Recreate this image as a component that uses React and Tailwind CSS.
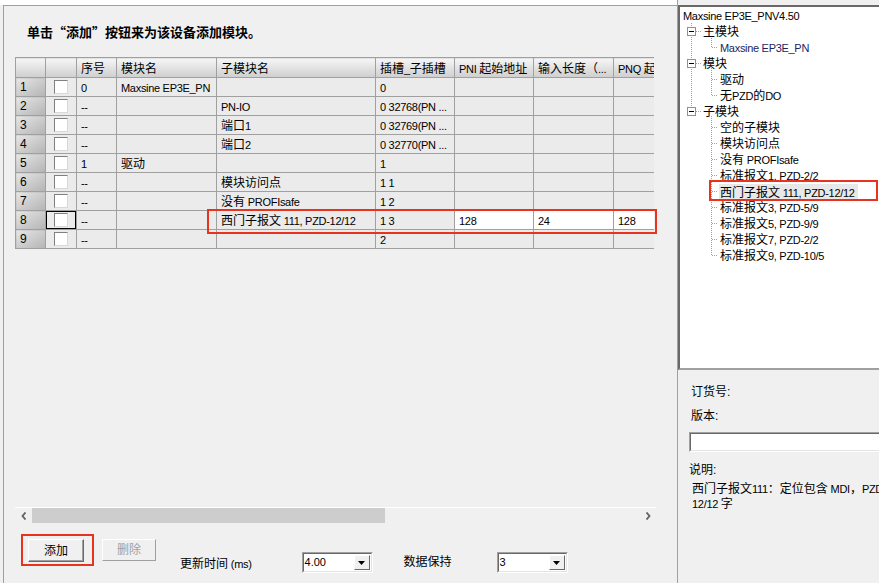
import React from "react";

const CJK = /[\u3000-\u303f\u4e00-\u9fff\uff00-\uffef“”]/;
function Mixed({ text }) {
  const parts = text.split(/([\u3000-\u303f\u4e00-\u9fff\uff00-\uffef“”]+)/);
  return (
    <span className="whitespace-pre">
      {parts.map((p, i) =>
        p === "" ? null : CJK.test(p) ? (
          <span key={i} className="text-[12px]">{p}</span>
        ) : (
          <span key={i} className="text-[11px] tracking-[-0.3px]">{p}</span>
        )
      )}
    </span>
  );
}

const rows = [
  { n: 1, seq: "0", mod: "Maxsine EP3E_PN", sub: "", slot: "0" },
  { n: 2, seq: "--", mod: "", sub: "PN-IO", slot: "0 32768(PN ..." },
  { n: 3, seq: "--", mod: "", sub: "端口1", slot: "0 32769(PN ..." },
  { n: 4, seq: "--", mod: "", sub: "端口2", slot: "0 32770(PN ..." },
  { n: 5, seq: "1", mod: "驱动", sub: "", slot: "1" },
  { n: 6, seq: "--", mod: "", sub: "模块访问点", slot: "1 1" },
  { n: 7, seq: "--", mod: "", sub: "没有 PROFIsafe", slot: "1 2" },
  { n: 8, seq: "--", mod: "", sub: "西门子报文 111, PZD-12/12", slot: "1 3", pni: "128", len: "24", pnq: "128", sel: true },
  { n: 9, seq: "--", mod: "", sub: "", slot: "2" },
];

const headers = ["", "", "序号", "模块名", "子模块名", "插槽_子插槽", "PNI 起始地址", "输入长度（...", "PNQ 起"];
const widths = [30, 31, 40, 100, 159, 79, 79, 80, 80];

function Checkbox() {
  return (
    <div className="w-[14px] h-[14px] bg-white border border-t-[#808080] border-l-[#808080] border-b-[#d8d8d8] border-r-[#d8d8d8]" />
  );
}

function Combo({ value }) {
  return (
    <div className="w-[71px] h-[21px] bg-white border border-t-[#a0a0a0] border-l-[#a0a0a0] border-b-white border-r-white flex items-center">
      <div className="flex-1 h-full border border-t-[#696969] border-l-[#696969] border-b-[#e3e3e3] border-r-[#e3e3e3] flex items-center justify-between pl-[1px] pr-[1px]">
        <span className="text-[11px] leading-none">{value}</span>
        <div className="w-[16px] h-[15px] bg-[#f0f0f0] border border-t-white border-l-white border-b-[#696969] border-r-[#696969] flex items-center justify-center">
          <svg width="7" height="4" viewBox="0 0 7 4"><polygon points="0,0 7,0 3.5,4" fill="#000" /></svg>
        </div>
      </div>
    </div>
  );
}

const treeRows = [
  { lvl: 0, t: "Maxsine EP3E_PNV4.50" },
  { lvl: 1, t: "主模块" },
  { lvl: 2, t: "Maxsine EP3E_PN", blue: true },
  { lvl: 1, t: "模块" },
  { lvl: 2, t: "驱动" },
  { lvl: 2, t: "无PZD的DO" },
  { lvl: 1, t: "子模块" },
  { lvl: 2, t: "空的子模块" },
  { lvl: 2, t: "模块访问点" },
  { lvl: 2, t: "没有 PROFIsafe" },
  { lvl: 2, t: "标准报文1, PZD-2/2" },
  { lvl: 2, t: "西门子报文 111, PZD-12/12", sel: true },
  { lvl: 2, t: "标准报文3, PZD-5/9" },
  { lvl: 2, t: "标准报文5, PZD-9/9" },
  { lvl: 2, t: "标准报文7, PZD-2/2" },
  { lvl: 2, t: "标准报文9, PZD-10/5" },
];

function TreeLines() {
  const boxes = [24, 56, 104];
  return (
    <svg className="absolute left-0 top-0" width="60" height="260" viewBox="0 0 60 260">
      <g stroke="#a0a0a0" strokeWidth="1" strokeDasharray="1 1" shapeRendering="crispEdges">
        <line x1="11.5" y1="16" x2="11.5" y2="104" />
        {boxes.map((y) => (
          <line key={y} x1="16" y1={y + 0.5} x2="21" y2={y + 0.5} />
        ))}
        <line x1="31.5" y1="29" x2="31.5" y2="40" />
        <line x1="31.5" y1="61" x2="31.5" y2="88" />
        <line x1="31.5" y1="109" x2="31.5" y2="248" />
        {[40, 72, 88, 120, 136, 152, 168, 184, 200, 216, 232, 248].map((y) => (
          <line key={y} x1="32" y1={y + 0.5} x2="38" y2={y + 0.5} />
        ))}
      </g>
      {boxes.map((y) => (
        <g key={y} shapeRendering="crispEdges">
          <rect x="7.5" y={y - 3.5} width="8" height="8" fill="#fff" stroke="#919191" />
          <line x1="9" y1={y + 0.5} x2="14" y2={y + 0.5} stroke="#000" />
        </g>
      ))}
    </svg>
  );
}

export default function App() {
  return (
    <div className="w-[879px] h-[583px] flex bg-[#f0f0f0] overflow-hidden text-black font-['Liberation_Sans','Noto_Sans_CJK_SC',sans-serif] leading-none">
      {/* Left panel */}
      <div className="w-[677px] flex flex-col">
        <div className="h-[5px] bg-white" />
        <div className="flex-1 ml-[3px] border-l border-t border-[#a0a0a0] flex flex-col">
          <div className="h-[51px] flex items-center pl-[23px]">
            <span className="text-[13px] font-bold font-['Noto_Sans_CJK_SC',sans-serif]">单击“添加”按钮来为该设备添加模块。</span>
          </div>
          {/* Table view */}
          <div className="relative ml-[11px] h-[450px] w-[641px]">
            <div className="w-[639px] overflow-hidden">
              <table className="border-collapse table-fixed w-[678px]">
                <colgroup>
                  {widths.map((w, i) => (
                    <col key={i} style={{ width: w }} />
                  ))}
                </colgroup>
                <thead>
                  <tr className="h-[20px]">
                    {headers.map((h, i) => (
                      <th
                        key={i}
                        className="border border-[#a0a0a0] bg-linear-to-b from-[#f6f6f6] to-[#cfcfcf] font-normal text-left px-[4px] whitespace-nowrap overflow-hidden"
                      >
                        <Mixed text={h} />
                      </th>
                    ))}
                  </tr>
                </thead>
                <tbody>
                  {rows.map((r) => (
                    <tr key={r.n} className="h-[19px]">
                      <td className="border border-[#a0a0a0] bg-linear-to-br from-[#e6e6e6] to-[#b4b4b4] px-[4px] text-[12px]">
                        {r.n}
                      </td>
                      <td className="border border-[#a0a0a0] bg-[#ebebeb] p-0">
                        <div className={`h-[18px] flex items-center justify-center ${r.sel ? "border border-black" : ""}`}>
                          <Checkbox />
                        </div>
                      </td>
                      <td className="border border-[#a0a0a0] bg-[#ebebeb] px-[4px] whitespace-nowrap overflow-hidden"><Mixed text={r.seq} /></td>
                      <td className="border border-[#a0a0a0] bg-[#ebebeb] px-[4px] whitespace-nowrap overflow-hidden"><Mixed text={r.mod} /></td>
                      <td className="border border-[#a0a0a0] bg-[#ebebeb] px-[4px] whitespace-nowrap overflow-hidden"><Mixed text={r.sub} /></td>
                      <td className="border border-[#a0a0a0] bg-[#ebebeb] px-[4px] whitespace-nowrap overflow-hidden"><Mixed text={r.slot} /></td>
                      <td className={`border border-[#a0a0a0] px-[4px] whitespace-nowrap overflow-hidden ${r.sel ? "bg-white" : "bg-[#ebebeb]"}`}><Mixed text={r.pni || ""} /></td>
                      <td className={`border border-[#a0a0a0] px-[4px] whitespace-nowrap overflow-hidden ${r.sel ? "bg-white" : "bg-[#ebebeb]"}`}><Mixed text={r.len || ""} /></td>
                      <td className={`border border-[#a0a0a0] px-[4px] whitespace-nowrap overflow-hidden ${r.sel ? "bg-white" : "bg-[#ebebeb]"}`}><Mixed text={r.pnq || ""} /></td>
                    </tr>
                  ))}
                </tbody>
              </table>
            </div>
            <div className="absolute left-[192px] top-[152px] w-[450px] h-[25px] border-2 border-[#e8331f]" />
          </div>
          {/* Horizontal scrollbar */}
          <div className="ml-[11px] w-[641px] h-[16px] border-t border-white flex items-center">
            <div className="w-[17px] h-full flex items-center justify-center">
              <svg width="6" height="8" viewBox="0 0 6 8"><polyline points="4.5,0.5 1.5,4 4.5,7.5" fill="none" stroke="#606060" strokeWidth="1.8" /></svg>
            </div>
            <div className="w-[353px] h-full bg-[#cdcdcd]" />
            <div className="flex-1" />
            <div className="w-[17px] h-full flex items-center justify-center">
              <svg width="6" height="8" viewBox="0 0 6 8"><polyline points="1.5,0.5 4.5,4 1.5,7.5" fill="none" stroke="#606060" strokeWidth="1.8" /></svg>
            </div>
          </div>
          {/* Bottom controls */}
          <div className="h-[60px] flex items-start">
            <div className="relative ml-[24px] mt-[16px]">
              <div className="w-[56px] h-[23px] bg-[#f0f0f0] border border-t-white border-l-white border-b-[#696969] border-r-[#696969] shadow-[inset_-1px_-1px_0_#a0a0a0] flex items-center justify-center text-[12px]">
                添加
              </div>
              <div className="absolute -left-[7px] -top-[5px] w-[73px] h-[32px] border-2 border-[#e8331f]" />
            </div>
            <div className="ml-[18px] mt-[16px] w-[54px] h-[22px] bg-[#f0f0f0] border border-t-white border-l-white border-b-[#a0a0a0] border-r-[#a0a0a0] flex items-center justify-center text-[12px] text-[#a0a0a0]">
              删除
            </div>
            <div className="ml-[24px] mt-[32px] whitespace-nowrap">
              <Mixed text="更新时间 (ms)" />
            </div>
            <div className="ml-[50px] mt-[29px]">
              <Combo value="4.00" />
            </div>
            <div className="ml-[31px] mt-[33px] text-[12px]">数据保持</div>
            <div className="ml-[45px] mt-[29px]">
              <Combo value="3" />
            </div>
          </div>
        </div>
      </div>

      {/* Right panel */}
      <div className="w-[202px] border-l border-[#a0a0a0] flex flex-col pt-[5px]">
        <div className="relative h-[365px] bg-white border-t-2 border-l-2 border-[#696969] border-b-2 border-b-[#a0a0a0]">
          <TreeLines />
          <div className="relative">
            {treeRows.map((r, i) => (
              <div
                key={i}
                className={`h-[16px] flex items-center whitespace-nowrap ${r.lvl === 0 ? "pl-[2px]" : r.lvl === 1 ? "pl-[22px]" : "pl-[39px]"} ${r.blue ? "text-[#1a2560]" : ""}`}
              >
                <span className={`${r.sel ? "bg-[#e8e8e8] pl-[1px] pr-[3px] h-[15px] leading-[15px] inline-block" : "pl-[1px]"}`}>
                  <Mixed text={r.t} />
                </span>
              </div>
            ))}
            <div className="absolute left-[29px] top-[173px] w-[169px] h-[21px] border-2 border-[#e8331f]" />
          </div>
        </div>
        <div className="flex-1 flex flex-col">
          <div className="mt-[14px] pl-[13px] h-[16px] flex items-center text-[12px]">订货号:</div>
          <div className="mt-[8px] pl-[13px] h-[16px] flex items-center text-[12px]">版本:</div>
          <div className="mt-[8px] ml-[11px] h-[20px] bg-white border border-t-[#a0a0a0] border-l-[#a0a0a0] border-b-white border-r-0">
            <div className="h-full border border-t-[#696969] border-l-[#696969] border-b-[#e3e3e3] border-r-0" />
          </div>
          <div className="mt-[10px] pl-[11px] h-[16px] flex items-center text-[12px]">说明:</div>
          <div className="mt-[2px] pl-[14px] h-[15px] flex items-center whitespace-nowrap overflow-hidden">
            <Mixed text="西门子报文111：定位包含 MDI，PZD-" />
          </div>
          <div className="pl-[14px] h-[15px] flex items-center whitespace-nowrap">
            <Mixed text="12/12 字" />
          </div>
        </div>
      </div>
    </div>
  );
}
